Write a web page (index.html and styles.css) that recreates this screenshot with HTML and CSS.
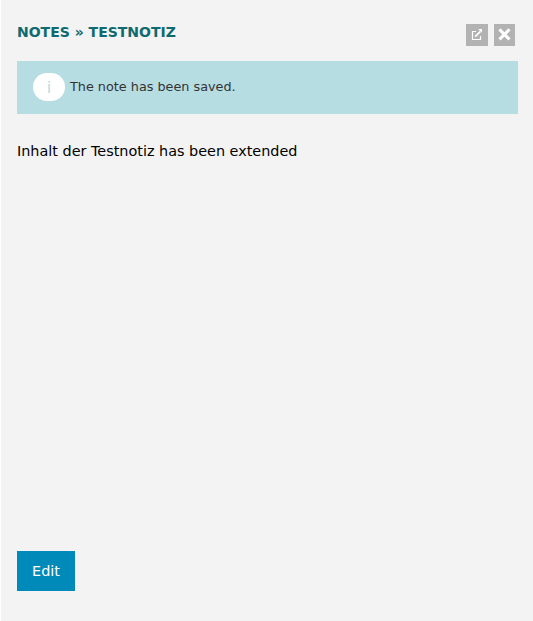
FILE: index.html
```
<!DOCTYPE html>
<html lang="en">
<head>
<meta charset="utf-8">
<title>Notes</title>
<link rel="stylesheet" href="styles.css">
</head>
<body>
<main class="panel">
  <header class="header">
    <h1 class="title">NOTES » TESTNOTIZ</h1>
    <div class="actions">
      <button class="action" aria-label="Open in new window">
        <svg width="22" height="22" viewBox="0 0 22 22"><path d="M10 7.5H6.5v8h8v-3.5" fill="none" stroke="#fff" stroke-width="1.2"/><path d="M9.2 12.6l5.2-5.2" stroke="#fff" stroke-width="1.6"/><path d="M12.2 5h3.8v3.8z" fill="#fff"/></svg>
      </button>
      <button class="action action-close" aria-label="Close">
        <svg width="21" height="22" viewBox="0 0 21 22"><path d="M6.6 6.5l7.8 7.8M14.4 6.5l-7.8 7.8" stroke="#fff" stroke-width="3.1" stroke-linecap="square"/></svg>
      </button>
    </div>
  </header>
  <div class="notice"><span class="info">i</span><span class="message">The note has been saved.</span></div>
  <p class="content">Inhalt der Testnotiz has been extended</p>
  <button class="edit">Edit</button>
</main>
</body>
</html>
```
FILE: styles.css
```
* { box-sizing: border-box; }
body {
  margin: 0;
  background: #fff;
  font-family: "DejaVu Sans", sans-serif;
}
.panel {
  display: flex;
  flex-direction: column;
  align-items: flex-start;
  height: 621px;
  margin-left: 1px;
  padding: 24px 15px 30px 16px;
  background: #f3f3f3;
}
.header {
  display: flex;
  justify-content: space-between;
  width: 100%;
  height: 37px;
  padding-right: 3px;
}
.title {
  margin: 0;
  font-size: 14px;
  line-height: 17px;
  color: #0f6a70;
}
.actions { display: flex; gap: 6px; }
.action {
  width: 22px;
  height: 22px;
  padding: 0;
  border: 0;
  background: #b2b2b2;
}
.action-close { width: 21px; }
.action svg { display: block; }
.notice {
  display: flex;
  align-items: center;
  gap: 5px;
  width: 100%;
  height: 53px;
  padding: 0 16px 1px;
  background: #b6dde1;
  color: #333;
  font-size: 12.8px;
}
.message { padding-bottom: 2px; }
.info {
  width: 32px;
  height: 28px;
  border-radius: 14px;
  background: #fff;
  color: #b6dde1;
  font-size: 16px;
  line-height: 29px;
  text-align: center;
}
.content {
  margin: 28px 0 0;
  font-size: 14.4px;
  line-height: 18px;
  color: #000;
}
.edit {
  width: 58px;
  height: 40px;
  margin-top: auto;
  padding: 0;
  border: 0;
  background: #008ab9;
  color: #fff;
  font: 14.4px "DejaVu Sans", sans-serif;
}
```
